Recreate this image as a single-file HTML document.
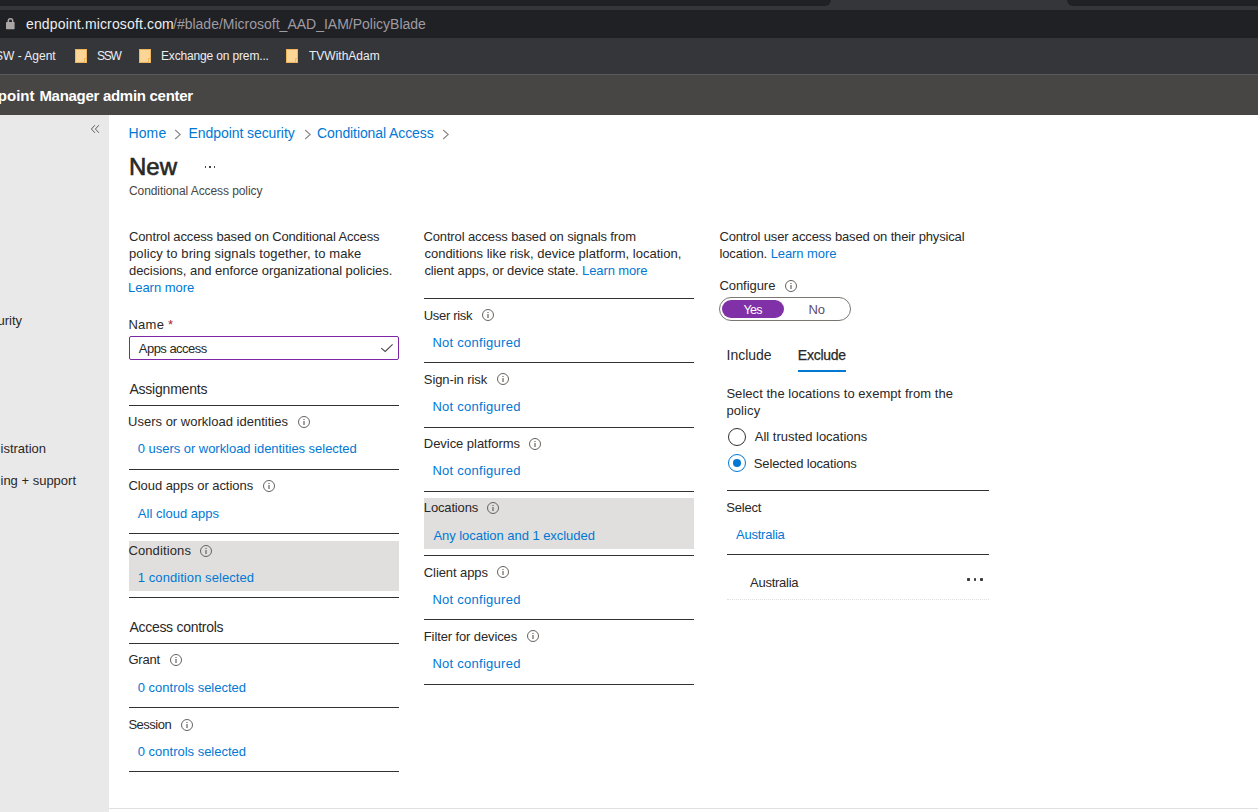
<!DOCTYPE html>
<html><head><meta charset="utf-8"><style>
html,body{margin:0;padding:0;width:1258px;height:812px;overflow:hidden;background:#fff;}
body{position:relative;font-family:"Liberation Sans", sans-serif;}
.t{position:absolute;white-space:nowrap;font-family:"Liberation Sans", sans-serif;}
.r{position:absolute;}
</style></head><body>
<div class="r" style="left:0px;top:0px;width:1258px;height:38px;background:#35363a;"></div>
<div class="r" style="left:0px;top:0px;width:831px;height:6px;background:#202124;border-bottom-right-radius:6px"></div>
<div class="r" style="left:1067px;top:0px;width:191px;height:6px;background:#202124;border-bottom-left-radius:6px"></div>
<div class="r" style="left:-20px;top:10px;width:1300px;height:28px;background:#202124;border-radius:14px"></div>
<div class="r" style="left:0px;top:38px;width:1258px;height:36px;background:#35363a;"></div>
<div class="r" style="left:0px;top:74px;width:1258px;height:1px;background:#5a5b5e;"></div>
<svg class="r" style="left:5px;top:17px" width="11" height="13" viewBox="0 0 11 13"><path d="M3.3 6V3.9a2.2 2.2 0 0 1 4.4 0V6" fill="none" stroke="#aaa6a6" stroke-width="1.5"/><rect x="1" y="5" width="8.6" height="7.2" rx="0.6" fill="#aaa6a6"/></svg>
<div class="t" style="left:26.00px;top:15px;font-size:14px;line-height:18px;color:#eceef1;font-weight:400;letter-spacing:0.143px;">endpoint.microsoft.com</div>
<div class="t" style="left:173.00px;top:15px;font-size:14px;line-height:18px;color:#9f9ba3;font-weight:400;">/#blade/Microsoft_AAD_IAM/PolicyBlade</div>
<div class="t" style="left:-5.00px;top:48px;font-size:12px;line-height:16px;color:#eceef1;font-weight:400;">SW - Agent</div>
<svg class="r" style="left:75px;top:49px" width="12" height="14" viewBox="0 0 12 14"><rect x="0.5" y="0.5" width="11" height="13" fill="#fdd697" stroke="#f0b55f" stroke-width="1"/><path d="M9.5 13.5V9.5H11.5" fill="none" stroke="#f0b55f" stroke-width="1"/></svg>
<div class="t" style="left:97.00px;top:48px;font-size:12px;line-height:16px;color:#eceef1;font-weight:400;letter-spacing:-1.300px;">SSW</div>
<svg class="r" style="left:139px;top:49px" width="12" height="14" viewBox="0 0 12 14"><rect x="0.5" y="0.5" width="11" height="13" fill="#fdd697" stroke="#f0b55f" stroke-width="1"/><path d="M9.5 13.5V9.5H11.5" fill="none" stroke="#f0b55f" stroke-width="1"/></svg>
<div class="t" style="left:161.00px;top:48px;font-size:12px;line-height:16px;color:#eceef1;font-weight:400;letter-spacing:-0.156px;">Exchange on prem...</div>
<svg class="r" style="left:286px;top:49px" width="12" height="14" viewBox="0 0 12 14"><rect x="0.5" y="0.5" width="11" height="13" fill="#fdd697" stroke="#f0b55f" stroke-width="1"/><path d="M9.5 13.5V9.5H11.5" fill="none" stroke="#f0b55f" stroke-width="1"/></svg>
<div class="t" style="left:309.00px;top:48px;font-size:12px;line-height:16px;color:#eceef1;font-weight:400;">TVWithAdam</div>
<div class="r" style="left:0px;top:75px;width:1258px;height:40px;background:#484644;"></div>
<div class="t" style="left:-2.20px;top:86px;font-size:15px;line-height:19px;color:#ffffff;font-weight:700;">point</div>
<div class="t" style="left:39.40px;top:86px;font-size:15px;line-height:19px;color:#ffffff;font-weight:700;letter-spacing:-0.289px;">Manager admin center</div>
<div class="r" style="left:0px;top:115px;width:109px;height:697px;background:#e9e9e9;"></div>
<svg class="r" style="left:90px;top:124px" width="11" height="10" viewBox="0 0 11 10"><path d="M4.9 1.2L1.4 5L4.9 8.8M8.9 1.2L5.4 5L8.9 8.8" fill="none" stroke="#605e5c" stroke-width="1"/></svg>
<div class="t" style="left:-2.50px;top:312px;font-size:13px;line-height:17px;color:#292827;font-weight:400;">urity</div>
<div class="t" style="left:0.50px;top:440px;font-size:13px;line-height:17px;color:#292827;font-weight:400;">istration</div>
<div class="t" style="left:0.50px;top:472px;font-size:13px;line-height:17px;color:#292827;font-weight:400;">ing + support</div>
<div class="t" style="left:128.40px;top:124px;font-size:14px;line-height:18px;color:#0078d4;font-weight:400;letter-spacing:0.167px;">Home</div>
<svg class="r" style="left:174px;top:129px" width="8" height="11" viewBox="0 0 8 11"><path d="M1.2 1L6.2 5.5L1.2 10" fill="none" stroke="#8a8886" stroke-width="1.1"/></svg>
<div class="t" style="left:188.60px;top:124px;font-size:14px;line-height:18px;color:#0078d4;font-weight:400;letter-spacing:-0.081px;">Endpoint security</div>
<svg class="r" style="left:304px;top:129px" width="8" height="11" viewBox="0 0 8 11"><path d="M1.2 1L6.2 5.5L1.2 10" fill="none" stroke="#8a8886" stroke-width="1.1"/></svg>
<div class="t" style="left:317.00px;top:124px;font-size:14px;line-height:18px;color:#0078d4;font-weight:400;letter-spacing:-0.094px;">Conditional Access</div>
<svg class="r" style="left:442px;top:129px" width="8" height="11" viewBox="0 0 8 11"><path d="M1.2 1L6.2 5.5L1.2 10" fill="none" stroke="#8a8886" stroke-width="1.1"/></svg>
<div class="t" style="left:129.00px;top:152px;font-size:24px;line-height:30px;color:#292827;font-weight:400;-webkit-text-stroke:0.6px #292827;">New</div>
<div class="r" style="left:204.9px;top:166px;width:1.3px;height:1.8px;background:#4a4846;"></div>
<div class="r" style="left:209.3px;top:166px;width:1.3px;height:1.8px;background:#4a4846;"></div>
<div class="r" style="left:213.9px;top:166px;width:1.3px;height:1.8px;background:#4a4846;"></div>
<div class="t" style="left:129.00px;top:183px;font-size:12px;line-height:16px;color:#484644;font-weight:400;letter-spacing:-0.083px;">Conditional Access policy</div>
<div class="t" style="left:129.00px;top:228px;font-size:13px;line-height:17px;color:#292827;font-weight:400;letter-spacing:-0.146px;">Control access based on Conditional Access</div>
<div class="t" style="left:129.00px;top:245px;font-size:13px;line-height:17px;color:#292827;font-weight:400;letter-spacing:0.100px;">policy to bring signals together, to make</div>
<div class="t" style="left:129.00px;top:262px;font-size:13px;line-height:17px;color:#292827;font-weight:400;letter-spacing:-0.043px;">decisions, and enforce organizational policies.</div>
<div class="t" style="left:128.00px;top:279px;font-size:13px;line-height:17px;color:#0078d4;font-weight:400;letter-spacing:-0.022px;">Learn more</div>
<div class="t" style="left:128.40px;top:316px;font-size:13px;line-height:17px;color:#292827;font-weight:400;letter-spacing:0.280px;">Name <span style="color:#a4262c">*</span></div>
<div class="r" style="left:129px;top:336px;width:270px;height:24px;background:#fff;box-sizing:border-box;border:1.5px solid #7f25a8;border-radius:2px"></div>
<div class="t" style="left:138.80px;top:340px;font-size:13px;line-height:17px;color:#292827;font-weight:400;letter-spacing:-0.530px;">Apps access</div>
<svg class="r" style="left:380px;top:342px" width="14" height="12" viewBox="0 0 14 12"><path d="M1.2 6.1L5.2 9.4L12.6 2.3" fill="none" stroke="#4a4846" stroke-width="1.1"/></svg>
<div class="t" style="left:129.40px;top:380px;font-size:14px;line-height:18px;color:#292827;font-weight:400;letter-spacing:-0.210px;">Assignments</div>
<div class="r" style="left:129px;top:405px;width:270px;height:1px;background:#323130;"></div>
<div class="t" style="left:128.00px;top:413px;font-size:13px;line-height:17px;color:#292827;font-weight:400;letter-spacing:0.011px;">Users or workload identities</div>
<svg class="r" style="left:297px;top:416px" width="13" height="13" viewBox="0 0 13 13"><circle cx="7" cy="6" r="5.5" fill="none" stroke="#66625f" stroke-width="1"/><rect x="6.4" y="5" width="1.2" height="4" fill="#66625f"/><rect x="6.4" y="3" width="1.2" height="1" fill="#66625f"/></svg>
<div class="t" style="left:137.80px;top:440px;font-size:13px;line-height:17px;color:#0078d4;font-weight:400;letter-spacing:-0.037px;">0 users or workload identities selected</div>
<div class="r" style="left:129px;top:469px;width:270px;height:1px;background:#323130;"></div>
<div class="t" style="left:128.40px;top:477px;font-size:13px;line-height:17px;color:#292827;font-weight:400;letter-spacing:-0.050px;">Cloud apps or actions</div>
<svg class="r" style="left:262px;top:480px" width="13" height="13" viewBox="0 0 13 13"><circle cx="7" cy="6" r="5.5" fill="none" stroke="#66625f" stroke-width="1"/><rect x="6.4" y="5" width="1.2" height="4" fill="#66625f"/><rect x="6.4" y="3" width="1.2" height="1" fill="#66625f"/></svg>
<div class="t" style="left:137.80px;top:505px;font-size:13px;line-height:17px;color:#0078d4;font-weight:400;letter-spacing:0.023px;">All cloud apps</div>
<div class="r" style="left:129px;top:533px;width:270px;height:1px;background:#323130;"></div>
<div class="r" style="left:129px;top:541px;width:270px;height:50px;background:#e1dfdd;"></div>
<div class="t" style="left:128.40px;top:542px;font-size:13px;line-height:17px;color:#292827;font-weight:400;letter-spacing:0.122px;">Conditions</div>
<svg class="r" style="left:199px;top:545px" width="13" height="13" viewBox="0 0 13 13"><circle cx="7" cy="6" r="5.5" fill="none" stroke="#66625f" stroke-width="1"/><rect x="6.4" y="5" width="1.2" height="4" fill="#66625f"/><rect x="6.4" y="3" width="1.2" height="1" fill="#66625f"/></svg>
<div class="t" style="left:137.80px;top:569px;font-size:13px;line-height:17px;color:#0078d4;font-weight:400;letter-spacing:0.068px;">1 condition selected</div>
<div class="r" style="left:129px;top:597px;width:270px;height:1px;background:#323130;"></div>
<div class="t" style="left:129.40px;top:618px;font-size:14px;line-height:18px;color:#292827;font-weight:400;letter-spacing:-0.279px;">Access controls</div>
<div class="r" style="left:129px;top:643px;width:270px;height:1px;background:#323130;"></div>
<div class="t" style="left:128.40px;top:651px;font-size:13px;line-height:17px;color:#292827;font-weight:400;letter-spacing:-0.225px;">Grant</div>
<svg class="r" style="left:169px;top:654px" width="13" height="13" viewBox="0 0 13 13"><circle cx="7" cy="6" r="5.5" fill="none" stroke="#66625f" stroke-width="1"/><rect x="6.4" y="5" width="1.2" height="4" fill="#66625f"/><rect x="6.4" y="3" width="1.2" height="1" fill="#66625f"/></svg>
<div class="t" style="left:137.80px;top:679px;font-size:13px;line-height:17px;color:#0078d4;font-weight:400;letter-spacing:-0.011px;">0 controls selected</div>
<div class="r" style="left:129px;top:707px;width:270px;height:1px;background:#323130;"></div>
<div class="t" style="left:128.40px;top:716px;font-size:13px;line-height:17px;color:#292827;font-weight:400;letter-spacing:-0.500px;">Session</div>
<svg class="r" style="left:180px;top:719px" width="13" height="13" viewBox="0 0 13 13"><circle cx="7" cy="6" r="5.5" fill="none" stroke="#66625f" stroke-width="1"/><rect x="6.4" y="5" width="1.2" height="4" fill="#66625f"/><rect x="6.4" y="3" width="1.2" height="1" fill="#66625f"/></svg>
<div class="t" style="left:137.80px;top:743px;font-size:13px;line-height:17px;color:#0078d4;font-weight:400;letter-spacing:-0.011px;">0 controls selected</div>
<div class="r" style="left:129px;top:771px;width:270px;height:1px;background:#323130;"></div>
<div class="r" style="left:109px;top:808px;width:1149px;height:1px;background:#e1dfdd;"></div>
<div class="t" style="left:423.40px;top:228px;font-size:13px;line-height:17px;color:#292827;font-weight:400;letter-spacing:-0.120px;">Control access based on signals from</div>
<div class="t" style="left:424.40px;top:245px;font-size:13px;line-height:17px;color:#292827;font-weight:400;letter-spacing:0.009px;">conditions like risk, device platform, location,</div>
<div class="t" style="left:424.40px;top:262px;font-size:13px;line-height:17px;color:#292827;font-weight:400;letter-spacing:-0.115px;">client apps, or device state. <span style="color:#0078d4">Learn more</span></div>
<div class="r" style="left:424px;top:298px;width:270px;height:1px;background:#323130;"></div>
<div class="r" style="left:424px;top:362px;width:270px;height:1px;background:#323130;"></div>
<div class="r" style="left:424px;top:427px;width:270px;height:1px;background:#323130;"></div>
<div class="r" style="left:424px;top:491px;width:270px;height:1px;background:#323130;"></div>
<div class="r" style="left:424px;top:555px;width:270px;height:1px;background:#323130;"></div>
<div class="r" style="left:424px;top:619px;width:270px;height:1px;background:#323130;"></div>
<div class="r" style="left:424px;top:684px;width:270px;height:1px;background:#323130;"></div>
<div class="r" style="left:424px;top:498px;width:270px;height:51px;background:#e1dfdd;"></div>
<div class="t" style="left:423.80px;top:307px;font-size:13px;line-height:17px;color:#292827;font-weight:400;letter-spacing:-0.325px;">User risk</div>
<svg class="r" style="left:481px;top:309px" width="13" height="13" viewBox="0 0 13 13"><circle cx="7" cy="6" r="5.5" fill="none" stroke="#66625f" stroke-width="1"/><rect x="6.4" y="5" width="1.2" height="4" fill="#66625f"/><rect x="6.4" y="3" width="1.2" height="1" fill="#66625f"/></svg>
<div class="t" style="left:432.40px;top:334px;font-size:13px;line-height:17px;color:#0078d4;font-weight:400;letter-spacing:0.269px;">Not configured</div>
<div class="t" style="left:423.80px;top:371px;font-size:13px;line-height:17px;color:#292827;font-weight:400;letter-spacing:-0.073px;">Sign-in risk</div>
<svg class="r" style="left:496px;top:373px" width="13" height="13" viewBox="0 0 13 13"><circle cx="7" cy="6" r="5.5" fill="none" stroke="#66625f" stroke-width="1"/><rect x="6.4" y="5" width="1.2" height="4" fill="#66625f"/><rect x="6.4" y="3" width="1.2" height="1" fill="#66625f"/></svg>
<div class="t" style="left:432.40px;top:398px;font-size:13px;line-height:17px;color:#0078d4;font-weight:400;letter-spacing:0.269px;">Not configured</div>
<div class="t" style="left:423.80px;top:435px;font-size:13px;line-height:17px;color:#292827;font-weight:400;letter-spacing:-0.040px;">Device platforms</div>
<svg class="r" style="left:527.6px;top:438px" width="13" height="13" viewBox="0 0 13 13"><circle cx="7" cy="6" r="5.5" fill="none" stroke="#66625f" stroke-width="1"/><rect x="6.4" y="5" width="1.2" height="4" fill="#66625f"/><rect x="6.4" y="3" width="1.2" height="1" fill="#66625f"/></svg>
<div class="t" style="left:432.40px;top:462px;font-size:13px;line-height:17px;color:#0078d4;font-weight:400;letter-spacing:0.269px;">Not configured</div>
<div class="t" style="left:423.80px;top:499px;font-size:13px;line-height:17px;color:#292827;font-weight:400;letter-spacing:-0.150px;">Locations</div>
<svg class="r" style="left:486px;top:502px" width="13" height="13" viewBox="0 0 13 13"><circle cx="7" cy="6" r="5.5" fill="none" stroke="#66625f" stroke-width="1"/><rect x="6.4" y="5" width="1.2" height="4" fill="#66625f"/><rect x="6.4" y="3" width="1.2" height="1" fill="#66625f"/></svg>
<div class="t" style="left:433.40px;top:527px;font-size:13px;line-height:17px;color:#0078d4;font-weight:400;letter-spacing:-0.042px;">Any location and 1 excluded</div>
<div class="t" style="left:423.80px;top:564px;font-size:13px;line-height:17px;color:#292827;font-weight:400;letter-spacing:-0.090px;">Client apps</div>
<svg class="r" style="left:496px;top:566px" width="13" height="13" viewBox="0 0 13 13"><circle cx="7" cy="6" r="5.5" fill="none" stroke="#66625f" stroke-width="1"/><rect x="6.4" y="5" width="1.2" height="4" fill="#66625f"/><rect x="6.4" y="3" width="1.2" height="1" fill="#66625f"/></svg>
<div class="t" style="left:432.40px;top:591px;font-size:13px;line-height:17px;color:#0078d4;font-weight:400;letter-spacing:0.269px;">Not configured</div>
<div class="t" style="left:423.80px;top:628px;font-size:13px;line-height:17px;color:#292827;font-weight:400;letter-spacing:-0.118px;">Filter for devices</div>
<svg class="r" style="left:526px;top:630px" width="13" height="13" viewBox="0 0 13 13"><circle cx="7" cy="6" r="5.5" fill="none" stroke="#66625f" stroke-width="1"/><rect x="6.4" y="5" width="1.2" height="4" fill="#66625f"/><rect x="6.4" y="3" width="1.2" height="1" fill="#66625f"/></svg>
<div class="t" style="left:432.40px;top:655px;font-size:13px;line-height:17px;color:#0078d4;font-weight:400;letter-spacing:0.269px;">Not configured</div>
<div class="t" style="left:719.40px;top:228px;font-size:13px;line-height:17px;color:#292827;font-weight:400;letter-spacing:-0.150px;">Control user access based on their physical</div>
<div class="t" style="left:719.40px;top:245px;font-size:13px;line-height:17px;color:#292827;font-weight:400;letter-spacing:-0.079px;">location. <span style="color:#0078d4">Learn more</span></div>
<div class="t" style="left:719.40px;top:277px;font-size:13px;line-height:17px;color:#292827;font-weight:400;letter-spacing:-0.050px;">Configure</div>
<svg class="r" style="left:784px;top:280px" width="13" height="13" viewBox="0 0 13 13"><circle cx="7" cy="6" r="5.5" fill="none" stroke="#66625f" stroke-width="1"/><rect x="6.4" y="5" width="1.2" height="4" fill="#66625f"/><rect x="6.4" y="3" width="1.2" height="1" fill="#66625f"/></svg>
<div class="r" style="left:719px;top:297px;width:132px;height:24px;background:#fff;box-sizing:border-box;border:1px solid #7a7672;border-radius:12px"></div>
<div class="r" style="left:722px;top:300px;width:62px;height:18px;background:#8031a7;border-radius:9px"></div>
<div class="t" style="left:743.60px;top:302px;font-size:12.5px;line-height:16.5px;color:#ffffff;font-weight:400;letter-spacing:-0.7px;">Yes</div>
<div class="t" style="left:808.40px;top:301px;font-size:13px;line-height:17px;color:#5c4b6e;font-weight:400;">No</div>
<div class="t" style="left:726.60px;top:346px;font-size:14px;line-height:18px;color:#292827;font-weight:400;letter-spacing:-0.017px;">Include</div>
<div class="t" style="left:797.80px;top:346px;font-size:14px;line-height:18px;color:#292827;font-weight:400;letter-spacing:-0.250px;-webkit-text-stroke:0.25px #292827;">Exclude</div>
<div class="r" style="left:798px;top:370px;width:48px;height:2px;background:#0078d4;"></div>
<div class="t" style="left:726.40px;top:385px;font-size:13px;line-height:17px;color:#292827;font-weight:400;letter-spacing:0.047px;">Select the locations to exempt from the</div>
<div class="t" style="left:726.40px;top:402px;font-size:13px;line-height:17px;color:#292827;font-weight:400;letter-spacing:0.120px;">policy</div>
<div class="r" style="left:728px;top:428px;width:18px;height:18px;box-sizing:border-box;border:1.2px solid #323130;border-radius:50%"></div>
<div class="t" style="left:754.80px;top:428px;font-size:13px;line-height:17px;color:#292827;font-weight:400;letter-spacing:-0.015px;">All trusted locations</div>
<div class="r" style="left:728px;top:454px;width:18px;height:18px;box-sizing:border-box;border:1px solid #0078d4;border-radius:50%"></div>
<div class="r" style="left:733px;top:459px;width:8px;height:8px;background:#0078d4;border-radius:50%"></div>
<div class="t" style="left:753.80px;top:455px;font-size:13px;line-height:17px;color:#292827;font-weight:400;letter-spacing:-0.147px;">Selected locations</div>
<div class="r" style="left:727px;top:490px;width:262px;height:1px;background:#323130;"></div>
<div class="t" style="left:726.20px;top:499px;font-size:13px;line-height:17px;color:#292827;font-weight:400;letter-spacing:-0.180px;">Select</div>
<div class="t" style="left:736.00px;top:526px;font-size:13px;line-height:17px;color:#0078d4;font-weight:400;letter-spacing:-0.225px;">Australia</div>
<div class="r" style="left:727px;top:554px;width:262px;height:1px;background:#323130;"></div>
<div class="t" style="left:750.00px;top:574px;font-size:13px;line-height:17px;color:#292827;font-weight:400;letter-spacing:-0.250px;">Australia</div>
<div class="r" style="left:967.2px;top:578.2px;width:2.6px;height:2.6px;background:#3b3a39;border-radius:0.8px"></div>
<div class="r" style="left:973.5px;top:578.2px;width:2.6px;height:2.6px;background:#3b3a39;border-radius:0.8px"></div>
<div class="r" style="left:980.2px;top:578.2px;width:2.6px;height:2.6px;background:#3b3a39;border-radius:0.8px"></div>
<div class="r" style="left:727px;top:599px;width:262px;height:1px;background:none;border-top:1px dotted #e1dfdd;height:0"></div>
</body></html>
